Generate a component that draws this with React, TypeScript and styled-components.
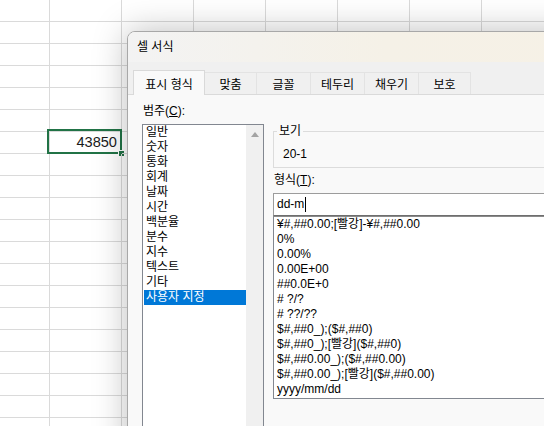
import styled, { createGlobalStyle } from "styled-components";

const GlobalStyle = createGlobalStyle`
  html, body { margin: 0; padding: 0; background: #fff; }
  body {
    font-family: "Liberation Sans", "Noto Sans CJK KR", sans-serif;
    overflow: hidden;
  }
  * { box-sizing: border-box; }
`;

const Page = styled.div`
  position: relative;
  width: 544px;
  height: 426px;
  overflow: hidden;
`;

const Sheet = styled.div`
  display: grid;
  grid-template-columns: 50px repeat(7, 72px);
  grid-auto-rows: 22px;
`;

const Cell = styled.div`
  position: relative;
  border-right: 1px solid #dadada;
  border-bottom: 1px solid #dadada;
  padding-right: 4px;
  font-family: "Liberation Sans", sans-serif;
  font-size: 14.6px;
  line-height: 21px;
  text-align: right;
  color: #1a1a1a;
`;

const Selection = styled.div`
  position: absolute;
  left: -3px;
  top: -3px;
  width: 75px;
  height: 25px;
  border: 2px solid #217346;
`;

const FillHandle = styled.div`
  position: absolute;
  left: 68px;
  top: 18px;
  width: 7px;
  height: 7px;
  background: #217346;
  border: 1px solid #fff;
`;

const Dialog = styled.div`
  position: absolute;
  left: 127px;
  top: 31px;
  width: 470px;
  height: 430px;
  display: flex;
  flex-direction: column;
  border: 1px solid #a8a8a8;
  border-top-left-radius: 8px;
  background: #f9f9f9;
  box-shadow: 0 0 34px rgba(0, 0, 0, 0.26);
  overflow: hidden;
  font-size: 12px;
  color: #000;
`;

const TitleBar = styled.div`
  height: 30px;
  line-height: 30px;
  padding-left: 9px;
  background: linear-gradient(to right, #f3f3f3 0%, #f5f1e7 55%, #f6f1e6 100%);
`;

const TabStrip = styled.div`
  height: 32px;
  display: flex;
  align-items: flex-end;
  padding-left: 5px;
  background: #f0f0f0;
`;

const Tab = styled.div<{ $active?: boolean; $w: number }>`
  position: relative;
  z-index: ${(p) => (p.$active ? 2 : 1)};
  width: ${(p) => p.$w}px;
  height: ${(p) => (p.$active ? 25 : 22)}px;
  margin-bottom: ${(p) => (p.$active ? -1 : 0)}px;
  display: flex;
  align-items: center;
  justify-content: center;
  border: 1px solid ${(p) => (p.$active ? "#d9d9d9" : "#e3e3e3")};
  border-bottom: none;
  background: ${(p) => (p.$active ? "#f9f9f9" : "#f0f0f0")};
  & + & {
    margin-left: -1px;
  }
`;

const Panel = styled.div`
  flex: 1;
  display: grid;
  grid-template-columns: 122px 1fr;
  column-gap: 9px;
  align-items: start;
  padding: 9px 0 0 14px;
  border-top: 1px solid #dadada;
  background: #f9f9f9;
`;

const Column = styled.div`
  display: flex;
  flex-direction: column;
  min-width: 0;
`;

const Label = styled.div<{ $gap?: number }>`
  line-height: 15px;
  padding-left: 1px;
  margin-top: ${(p) => p.$gap ?? 0}px;
  margin-bottom: 5px;
`;

const CategoryList = styled.div`
  height: 320px;
  display: grid;
  grid-template-columns: 1fr 17px;
  border: 1px solid #828790;
  background: #fff;
`;

const Items = styled.div`
  padding-left: 1px;
`;

const Item = styled.div<{ $selected?: boolean }>`
  line-height: 15px;
  padding-left: 2px;
  white-space: nowrap;
  background: ${(p) => (p.$selected ? "#0078d7" : "transparent")};
  color: ${(p) => (p.$selected ? "#fff" : "#000")};
`;

const ScrollTrack = styled.div`
  background: #f0f0f0;
  display: flex;
  justify-content: center;
  padding-top: 7px;
`;

const UpArrow = styled.div`
  width: 0;
  height: 0;
  border-left: 4.5px solid transparent;
  border-right: 4.5px solid transparent;
  border-bottom: 5px solid #a3a3a3;
`;

const Sample = styled.fieldset`
  margin: 20px 0 0;
  padding: 8px 9px 5px;
  border: 1px solid #dcdcdc;
  min-width: 0;
`;

const Legend = styled.legend`
  margin-left: -6px;
  padding: 0 2px;
  line-height: 15px;
`;

const SampleText = styled.div`
  line-height: 15px;
`;

const FormatInput = styled.div`
  height: 23px;
  display: flex;
  align-items: center;
  padding-left: 3px;
  border: 1px solid #9c9c9c;
  border-bottom-color: #6e6e6e;
  background: #fff;
  line-height: 15px;
`;

const Caret = styled.span`
  display: inline-block;
  width: 1px;
  height: 15px;
  margin-left: 1px;
  background: #000;
`;

const FormatList = styled.div`
  border: 1px solid #828790;
  border-top-color: #8a8a8a;
  background: #fff;
  padding: 0 0 1px 1px;
`;

const categories = [
  "일반",
  "숫자",
  "통화",
  "회계",
  "날짜",
  "시간",
  "백분율",
  "분수",
  "지수",
  "텍스트",
  "기타",
  "사용자 지정",
];

const formats = [
  "¥#,##0.00;[빨강]-¥#,##0.00",
  "0%",
  "0.00%",
  "0.00E+00",
  "##0.0E+0",
  "# ?/?",
  "# ??/??",
  "$#,##0_);($#,##0)",
  "$#,##0_);[빨강]($#,##0)",
  "$#,##0.00_);($#,##0.00)",
  "$#,##0.00_);[빨강]($#,##0.00)",
  "yyyy/mm/dd",
];

const tabs = [
  { label: "표시 형식", w: 72 },
  { label: "맞춤", w: 53 },
  { label: "글꼴", w: 55 },
  { label: "테두리", w: 55 },
  { label: "채우기", w: 55 },
  { label: "보호", w: 53 },
];

const ROWS = 20;
const COLS = 8;

export default function App() {
  const cells = [];
  for (let r = 0; r < ROWS; r++) {
    for (let c = 0; c < COLS; c++) {
      const active = r === 6 && c === 1;
      cells.push(
        <Cell key={`${r}-${c}`}>
          {active && (
            <>
              43850
              <Selection />
              <FillHandle />
            </>
          )}
        </Cell>
      );
    }
  }

  return (
    <>
      <GlobalStyle />
      <Page>
        <Sheet>{cells}</Sheet>
        <Dialog>
          <TitleBar>셀 서식</TitleBar>
          <TabStrip>
            {tabs.map((t, i) => (
              <Tab key={t.label} $w={t.w} $active={i === 0}>
                {t.label}
              </Tab>
            ))}
          </TabStrip>
          <Panel>
            <Column>
              <Label>
                범주(<u>C</u>):
              </Label>
              <CategoryList>
                <Items>
                  {categories.map((c) => (
                    <Item key={c} $selected={c === "사용자 지정"}>
                      {c}
                    </Item>
                  ))}
                </Items>
                <ScrollTrack>
                  <UpArrow />
                </ScrollTrack>
              </CategoryList>
            </Column>
            <Column>
              <Sample>
                <Legend>보기</Legend>
                <SampleText>20-1</SampleText>
              </Sample>
              <Label $gap={5}>
                형식(<u>T</u>):
              </Label>
              <FormatInput>
                dd-m
                <Caret />
              </FormatInput>
              <FormatList>
                {formats.map((f) => (
                  <Item key={f}>{f}</Item>
                ))}
              </FormatList>
            </Column>
          </Panel>
        </Dialog>
      </Page>
    </>
  );
}
